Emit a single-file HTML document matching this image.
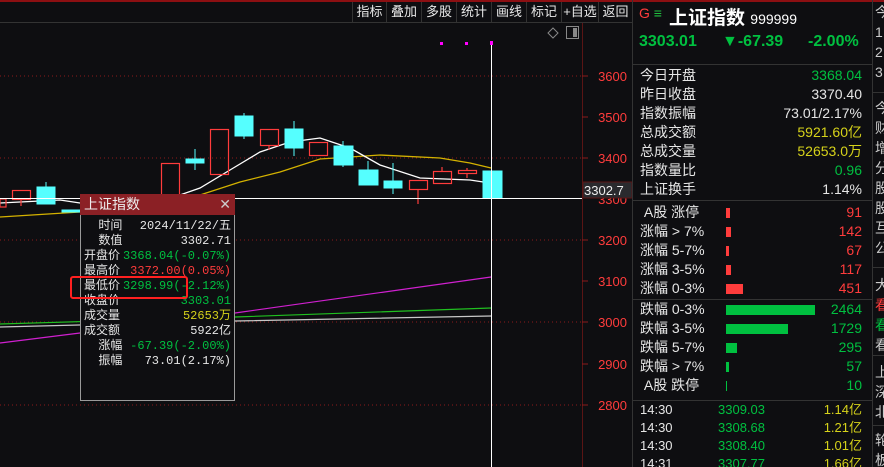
<!DOCTYPE html>
<html><head><meta charset="utf-8"><style>
*{margin:0;padding:0;box-sizing:border-box}
html,body{width:884px;height:467px;overflow:hidden}
body{background:#0e0e11;position:relative;font-family:"Liberation Sans","Noto Sans CJK SC",sans-serif;color:#e6e6e6}
.a{position:absolute;white-space:nowrap}
.btn{position:absolute;top:2px;height:20px;font-size:13px;line-height:20px;color:#e8e8e8;border-left:1px solid #333;text-align:center}
.pp{font-family:"Liberation Mono","Noto Sans CJK SC",monospace;font-size:12px;line-height:15px}
.r{color:#ff3c3c}.g{color:#00c040}.y{color:#d6d21a}.w{color:#f0f0f0}
.rp{font-size:14px;line-height:19px}
.st div{height:20px}
</style></head><body>
<div class="a" style="left:0;top:0;width:884px;height:2px;background:#8c0f12"></div>
<div class="a" style="left:0;top:22px;width:632px;height:1px;background:#333"></div>
<div class="btn" style="left:352px;width:34px">指标</div>
<div class="btn" style="left:386px;width:35px">叠加</div>
<div class="btn" style="left:421px;width:35px">多股</div>
<div class="btn" style="left:456px;width:35px">统计</div>
<div class="btn" style="left:491px;width:35px">画线</div>
<div class="btn" style="left:526px;width:35px">标记</div>
<div class="btn" style="left:561px;width:37px">+自选</div>
<div class="btn" style="left:598px;width:34px">返回</div>

<svg class="a" style="left:0;top:0" width="632" height="467">
<g stroke="#8c1a1a" stroke-dasharray="1,3">
<line x1="0" y1="76" x2="585" y2="76"/><line x1="0" y1="158" x2="585" y2="158"/><line x1="0" y1="240" x2="585" y2="240"/><line x1="0" y1="322" x2="585" y2="322"/><line x1="0" y1="405" x2="585" y2="405"/>
</g>
<line x1="582.5" y1="23" x2="582.5" y2="467" stroke="#5a1515"/>
<g stroke="#8c1a1a"><line x1="582" y1="76" x2="588" y2="76"/><line x1="582" y1="117" x2="588" y2="117"/><line x1="582" y1="158" x2="588" y2="158"/><line x1="582" y1="240" x2="588" y2="240"/><line x1="582" y1="281" x2="588" y2="281"/><line x1="582" y1="322" x2="588" y2="322"/><line x1="582" y1="364" x2="588" y2="364"/><line x1="582" y1="405" x2="588" y2="405"/></g>
<g font-size="13" fill="#ff3c3c" text-anchor="end" font-family="Liberation Sans"><text x="627" y="81">3600</text><text x="627" y="122">3500</text><text x="627" y="163">3400</text><text x="627" y="204">3300</text><text x="627" y="245">3200</text><text x="627" y="286">3100</text><text x="627" y="327">3000</text><text x="627" y="369">2900</text><text x="627" y="410">2800</text></g>
<rect x="583" y="182" width="49" height="16" fill="#2a2a2e" stroke="#5a1515"/>
<text x="584" y="195" font-size="13" fill="#eee" font-family="Liberation Sans">3302.7</text>
<polyline points="0,343 80,333 235,313 491,277" fill="none" stroke="#d020d0" stroke-width="1.2"/>
<polyline points="0,324 235,317 491,308" fill="none" stroke="#20c020" stroke-width="1.2"/>
<polyline points="0,327 235,321 491,316" fill="none" stroke="#c8c8c8" stroke-width="1.2"/>
<polyline points="0,217 80,212 200,195 240,182 280,172 320,159 380,155 440,158 470,163 491,168" fill="none" stroke="#d4b200" stroke-width="1.3"/>
<polyline points="0,203 60,200 80,203 180,195 200,188 230,170 260,152 290,142 320,138 350,148 380,165 420,178 470,180 490,183" fill="none" stroke="#fff" stroke-width="1.3"/>
<g fill="none" stroke="#ff3c3c" stroke-width="1.2">
<rect x="0" y="199" width="6" height="8"/><rect x="12.5" y="190.5" width="18" height="9"/><line x1="21" y1="199" x2="21" y2="206"/>
<rect x="161.5" y="163.5" width="18" height="37"/><rect x="210.5" y="129.5" width="18" height="45"/>
<rect x="260.5" y="129.5" width="18" height="16"/><line x1="269" y1="145" x2="269" y2="150"/>
<rect x="309.5" y="142.5" width="18" height="13"/>
<rect x="409.5" y="180.5" width="18" height="9"/><line x1="418" y1="189" x2="418" y2="204"/>
<rect x="433.5" y="171.5" width="18" height="12"/><line x1="442" y1="167" x2="442" y2="171"/>
<rect x="458.5" y="170.5" width="18" height="3"/><line x1="467" y1="168" x2="467" y2="170"/><line x1="467" y1="174" x2="467" y2="178"/>
</g>
<g fill="#55ffff" stroke="#55ffff">
<rect x="37" y="187" width="18" height="17"/><line x1="46" y1="182" x2="46" y2="187"/>
<rect x="62" y="210" width="18" height="2"/>
<rect x="186" y="159" width="18" height="4"/><line x1="195" y1="149" x2="195" y2="170"/>
<rect x="235" y="116" width="18" height="20"/><line x1="244" y1="113" x2="244" y2="139"/>
<rect x="285" y="129" width="18" height="19"/><line x1="294" y1="121" x2="294" y2="156"/>
<rect x="334" y="146" width="19" height="19"/><line x1="343" y1="141" x2="343" y2="167"/>
<rect x="359" y="170" width="19" height="15"/><line x1="368" y1="161" x2="368" y2="170"/>
<rect x="384" y="181" width="18" height="7"/><line x1="393" y1="163" x2="393" y2="194"/>
<rect x="483" y="171" width="19" height="27"/>
</g>
<line x1="0" y1="198.5" x2="582" y2="198.5" stroke="#fff"/>
<line x1="491.5" y1="42" x2="491.5" y2="467" stroke="#fff"/>
<g fill="#ff00ff"><rect x="440" y="42" width="3" height="3"/><rect x="465" y="42" width="3" height="3"/><rect x="490" y="41" width="3" height="4"/></g>
<path d="M553 28 L558 33 L553 38 L548 33Z" fill="none" stroke="#888"/>
<rect x="566.5" y="26.5" width="12" height="12" fill="none" stroke="#888"/><rect x="573" y="28" width="4" height="9" fill="#888"/>
</svg>

<div class="a" style="left:80px;top:194px;width:155px;height:207px;background:#0e0e11;border:1px solid #9a9a9a"></div>
<div class="a" style="left:80px;top:194px;width:155px;height:21px;background:#8b2025;font-size:14px;line-height:21px;padding-left:4px;color:#eee">上证指数<span style="position:absolute;right:4px;color:#ccc">✕</span></div>
<div class="a pp" style="left:84px;top:219px;width:147px">
<div style="display:flex;justify-content:space-between"><span>&nbsp;&nbsp;时间</span><span>2024/11/22/五</span></div>
<div style="display:flex;justify-content:space-between"><span>&nbsp;&nbsp;数值</span><span>3302.71</span></div>
<div style="display:flex;justify-content:space-between"><span>开盘价</span><span class="g">3368.04(-0.07%)</span></div>
<div style="display:flex;justify-content:space-between"><span>最高价</span><span class="r">3372.00(0.05%)</span></div>
<div style="display:flex;justify-content:space-between"><span>最低价</span><span class="g">3298.99(-2.12%)</span></div>
<div style="display:flex;justify-content:space-between"><span>收盘价</span><span class="g">3303.01</span></div>
<div style="display:flex;justify-content:space-between"><span>成交量</span><span class="y">52653万</span></div>
<div style="display:flex;justify-content:space-between"><span>成交额</span><span>5922亿</span></div>
<div style="display:flex;justify-content:space-between"><span>&nbsp;&nbsp;涨幅</span><span class="g">-67.39(-2.00%)</span></div>
<div style="display:flex;justify-content:space-between"><span>&nbsp;&nbsp;振幅</span><span>73.01(2.17%)</span></div>
</div>
<div class="a" style="left:70px;top:276px;width:118px;height:23px;border:2px solid #ff2020;border-radius:3px"></div>

<div class="a" style="left:632px;top:0;width:1px;height:467px;background:#333"></div>
<div class="a" style="left:872px;top:0;width:1px;height:467px;background:#333"></div>
<div class="a" style="left:639px;top:5px;font-size:14px;color:#ff3c3c">G <span style="color:#20c040">≡</span></div>
<div class="a" style="left:669px;top:3px;font-size:19px;font-weight:bold;color:#fff">上证指数 <span style="font-size:14px;font-weight:normal">999999</span></div>
<div class="a g" style="left:639px;top:33px;font-size:16px;font-weight:bold">3303.01</div>
<div class="a g" style="left:722px;top:33px;font-size:16px;font-weight:bold">▼-67.39</div>
<div class="a g" style="left:808px;top:33px;font-size:16px;font-weight:bold">-2.00%</div>
<div class="a" style="left:633px;top:64px;width:239px;height:1px;background:#333"></div>
<div class="a rp" style="left:640px;top:66px;width:222px">
<div style="display:flex;justify-content:space-between"><span>今日开盘</span><span class="g">3368.04</span></div>
<div style="display:flex;justify-content:space-between"><span>昨日收盘</span><span>3370.40</span></div>
<div style="display:flex;justify-content:space-between"><span>指数振幅</span><span>73.01/2.17%</span></div>
<div style="display:flex;justify-content:space-between"><span>总成交额</span><span class="y">5921.60亿</span></div>
<div style="display:flex;justify-content:space-between"><span>总成交量</span><span class="y">52653.0万</span></div>
<div style="display:flex;justify-content:space-between"><span>指数量比</span><span class="g">0.96</span></div>
<div style="display:flex;justify-content:space-between"><span>上证换手</span><span>1.14%</span></div>
</div>
<div class="a" style="left:633px;top:200px;width:239px;height:1px;background:#333"></div>
<div class="a rp" style="left:640px;top:203px;width:222px">
<div style="position:relative">&nbsp;A股 涨停<span class="r" style="position:absolute;right:0">91</span><i style="position:absolute;left:86px;top:5px;width:4px;height:10px;background:#ff3c3c"></i></div>
<div style="position:relative">涨幅 &gt; 7%<span class="r" style="position:absolute;right:0">142</span><i style="position:absolute;left:86px;top:5px;width:5px;height:10px;background:#ff3c3c"></i></div>
<div style="position:relative">涨幅 5-7%<span class="r" style="position:absolute;right:0">67</span><i style="position:absolute;left:86px;top:5px;width:3px;height:10px;background:#ff3c3c"></i></div>
<div style="position:relative">涨幅 3-5%<span class="r" style="position:absolute;right:0">117</span><i style="position:absolute;left:86px;top:5px;width:5px;height:10px;background:#ff3c3c"></i></div>
<div style="position:relative">涨幅 0-3%<span class="r" style="position:absolute;right:0">451</span><i style="position:absolute;left:86px;top:5px;width:17px;height:10px;background:#ff3c3c"></i></div>
</div>
<div class="a" style="left:633px;top:299px;width:239px;height:1px;background:#333"></div>
<div class="a rp" style="left:640px;top:300px;width:222px">
<div style="position:relative">跌幅 0-3%<span class="g" style="position:absolute;right:0">2464</span><i style="position:absolute;left:86px;top:5px;width:89px;height:10px;background:#00c040"></i></div>
<div style="position:relative">跌幅 3-5%<span class="g" style="position:absolute;right:0">1729</span><i style="position:absolute;left:86px;top:5px;width:62px;height:10px;background:#00c040"></i></div>
<div style="position:relative">跌幅 5-7%<span class="g" style="position:absolute;right:0">295</span><i style="position:absolute;left:86px;top:5px;width:11px;height:10px;background:#00c040"></i></div>
<div style="position:relative">跌幅 &gt; 7%<span class="g" style="position:absolute;right:0">57</span><i style="position:absolute;left:86px;top:5px;width:3px;height:10px;background:#00c040"></i></div>
<div style="position:relative">&nbsp;A股 跌停<span class="g" style="position:absolute;right:0">10</span><i style="position:absolute;left:86px;top:5px;width:1px;height:10px;background:#00c040"></i></div>
</div>
<div class="a" style="left:633px;top:400px;width:239px;height:1px;background:#333"></div>
<div class="a" style="left:640px;top:401px;width:222px;font-size:13px;line-height:18px">
<div style="position:relative">14:30<span class="g" style="position:absolute;left:78px">3309.03</span><span class="y" style="position:absolute;right:0">1.14亿</span></div>
<div style="position:relative">14:30<span class="g" style="position:absolute;left:78px">3308.68</span><span class="y" style="position:absolute;right:0">1.21亿</span></div>
<div style="position:relative">14:30<span class="g" style="position:absolute;left:78px">3308.40</span><span class="y" style="position:absolute;right:0">1.01亿</span></div>
<div style="position:relative">14:31<span class="g" style="position:absolute;left:78px">3307.77</span><span class="y" style="position:absolute;right:0">1.66亿</span></div>
</div>
<div class="a" style="left:873px;top:92px;width:11px;height:1px;background:#333"></div>
<div class="a" style="left:873px;top:267px;width:11px;height:1px;background:#333"></div>
<div class="a" style="left:873px;top:355px;width:11px;height:1px;background:#333"></div>
<div class="a" style="left:873px;top:425px;width:11px;height:1px;background:#333"></div>
<div class="a st" style="left:875px;top:2px;font-size:14px;line-height:20px;color:#ccc">
<div>今</div><div>1</div><div>2</div><div>3</div>
</div>
<div class="a st" style="left:875px;top:98px;font-size:14px;line-height:20px;color:#ccc">
<div>今</div><div>财</div><div>增</div><div>分</div><div>股</div><div>股</div><div>互</div><div>公</div>
</div>
<div class="a st" style="left:875px;top:275px;font-size:14px;line-height:20px;color:#ccc">
<div>大</div><div class="r">看</div><div class="g">看</div><div>看</div>
</div>
<div class="a st" style="left:875px;top:362px;font-size:14px;line-height:20px;color:#ccc">
<div>上</div><div>深</div><div>北</div>
</div>
<div class="a st" style="left:875px;top:430px;font-size:14px;line-height:20px;color:#ccc">
<div>轮</div><div>板</div>
</div>
</body></html>
